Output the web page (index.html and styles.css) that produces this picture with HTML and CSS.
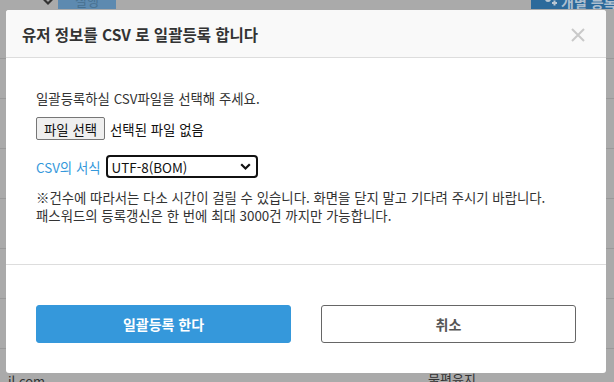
FILE: index.html
```html
<!DOCTYPE html>
<html lang="ko">
<head>
<meta charset="utf-8">
<link rel="stylesheet" href="styles.css">
</head>
<body>
<div class="page">
  <div class="topbar">
    <div class="tb-left">
      <span class="chev">
        <svg width="10" height="7" viewBox="0 0 10 7"><path d="M1 0.5 L5 4.5 L9 0.5" fill="none" stroke="#333" stroke-width="2.2"/></svg>
      </span>
      <span class="run-btn">실행</span>
    </div>
    <span class="add-btn">
      <svg width="14" height="12" viewBox="0 0 14 12"><circle cx="5" cy="2" r="3" fill="#b9c6d2"/><path d="M9 6 h5 M11.5 3.5 v5" stroke="#b9c6d2" stroke-width="2"/></svg>
      개별 등록
    </span>
  </div>
  <div class="rows">
    <div class="row"></div>
    <div class="row"></div>
    <div class="row"></div>
    <div class="row"></div>
    <div class="row"></div>
    <div class="row"></div>
    <div class="row last"><span class="c1">il.com</span><span class="c2">물편유지</span></div>
  </div>

  <div class="modal">
    <div class="modal-head">
      <h2 class="title">유저 정보를 CSV 로 일괄등록 합니다</h2>
      <span class="close">
        <svg width="14" height="14" viewBox="0 0 14 14"><path d="M1 1 L13 13 M13 1 L1 13" stroke="#c9c9c9" stroke-width="2"/></svg>
      </span>
    </div>
    <div class="modal-body">
      <p class="lead">일괄등록하실 CSV파일을 선택해 주세요.</p>
      <div class="file-row">
        <span class="file-btn">파일 선택</span>
        <span class="file-name">선택된 파일 없음</span>
      </div>
      <div class="fmt-row">
        <span class="fmt-label">CSV의 서식</span>
        <span class="select">
          <span>UTF-8(BOM)</span>
          <svg width="11" height="8" viewBox="0 0 11 8"><path d="M1.2 1.2 L5.5 5.5 L9.8 1.2" fill="none" stroke="#111" stroke-width="2.2"/></svg>
        </span>
      </div>
      <div class="notes">
        <p>※건수에 따라서는 다소 시간이 걸릴 수 있습니다. 화면을 닫지 말고 기다려 주시기 바랍니다.</p>
        <p>패스워드의 등록갱신은 한 번에 최대 3000건 까지만 가능합니다.</p>
      </div>
    </div>
    <div class="modal-foot">
      <button class="btn primary">일괄등록 한다</button>
      <button class="btn outline">취소</button>
    </div>
  </div>
</div>
</body>
</html>
```
FILE: styles.css
```css
* { box-sizing: border-box; }
html, body { margin: 0; padding: 0; }
body {
  width: 614px;
  height: 382px;
  overflow: hidden;
  background: #aaaaaa;
  font-family: "Noto Sans CJK KR", "Noto Sans", sans-serif;
  color: #333;
}
.page { position: relative; width: 614px; height: 382px; overflow: hidden; }

.topbar {
  height: 9px;
  display: flex;
  justify-content: space-between;
  align-items: flex-end;
  overflow: hidden;
}
.tb-left { display: flex; align-items: flex-end; height: 9px; padding-left: 43px; gap: 5px; }
.chev { display: flex; align-items: flex-end; height: 9px; padding-bottom: 3px; }
.run-btn {
  width: 58px; height: 9px;
  background: #5d8ab0;
  color: #47708f;
  font-size: 13px;
  line-height: 2px;
  text-align: center;
  overflow: hidden;
}
.add-btn {
  width: 83px; height: 9px;
  background: #2c6a9b;
  color: #aebfcf;
  font-size: 14px;
  font-weight: bold;
  line-height: 4px;
  padding-left: 12px;
  overflow: hidden;
  display: flex;
  gap: 4px;
  align-items: flex-start;
  white-space: nowrap;
}
.add-btn svg { margin-top: -3px; flex: none; }

.rows { padding-top: 50px; }
.row { height: 50px; border-top: 1px solid #999999; }
.row:first-child { margin-top: -1px; height: 40px; }
.row.last { position: relative; font-size: 13px; color: #333; }
.row.last .c1 { position: absolute; left: 8px; top: 22px; }
.row.last .c2 { position: absolute; left: 428px; top: 20px; }

.modal {
  position: absolute;
  left: 6px; top: 10px;
  width: 600px; height: 363px;
  background: #fff;
  border-radius: 3px;
  display: flex;
  flex-direction: column;
  overflow: hidden;
}
.modal-head {
  height: 48px;
  background: #f9f9f9;
  border-bottom: 1px solid #dddddd;
  display: flex;
  align-items: center;
  justify-content: space-between;
  padding: 0 21px 0 16px;
}
.title { margin: 0; font-size: 15.5px; font-weight: bold; color: #333; }
.close { display: flex; margin-top: 2px; }

.modal-body {
  height: 207px;
  padding: 31px 30px 0;
  border-bottom: 1px solid #dddddd;
  font-size: 13.4px;
  line-height: 18px;
}
.lead { margin: 0; }
.file-row { display: flex; align-items: center; margin-top: 10px; height: 23px; }
.file-btn {
  height: 23px;
  padding: 0 7px;
  border: 1px solid #767676;
  border-radius: 2px;
  background: #efefef;
  color: #111;
  display: flex; align-items: center;
}
.file-name { margin-left: 5px; color: #111; }
.fmt-row { display: flex; align-items: center; margin-top: 15px; height: 23px; }
.fmt-label { color: #3498db; }
.select {
  margin-left: 5px;
  width: 152px; height: 23px;
  border: 2px solid #111;
  border-radius: 4px;
  display: flex; align-items: center; justify-content: space-between;
  padding: 0 5px 0 4px;
  color: #111;
}
.notes { margin-top: 10px; }
.notes p { margin: 0; }

.modal-foot {
  flex: 1;
  display: flex;
  justify-content: space-between;
  padding: 40px 30px 0;
}
.btn {
  width: 255px; height: 38px;
  border-radius: 3px;
  font-family: inherit;
  font-size: 14px;
  font-weight: bold;
  cursor: pointer;
}
.btn.primary { background: #3598db; border: 1px solid #3598db; color: #fff; }
.btn.outline { background: #fff; border: 1px solid #666; color: #555; }
```
